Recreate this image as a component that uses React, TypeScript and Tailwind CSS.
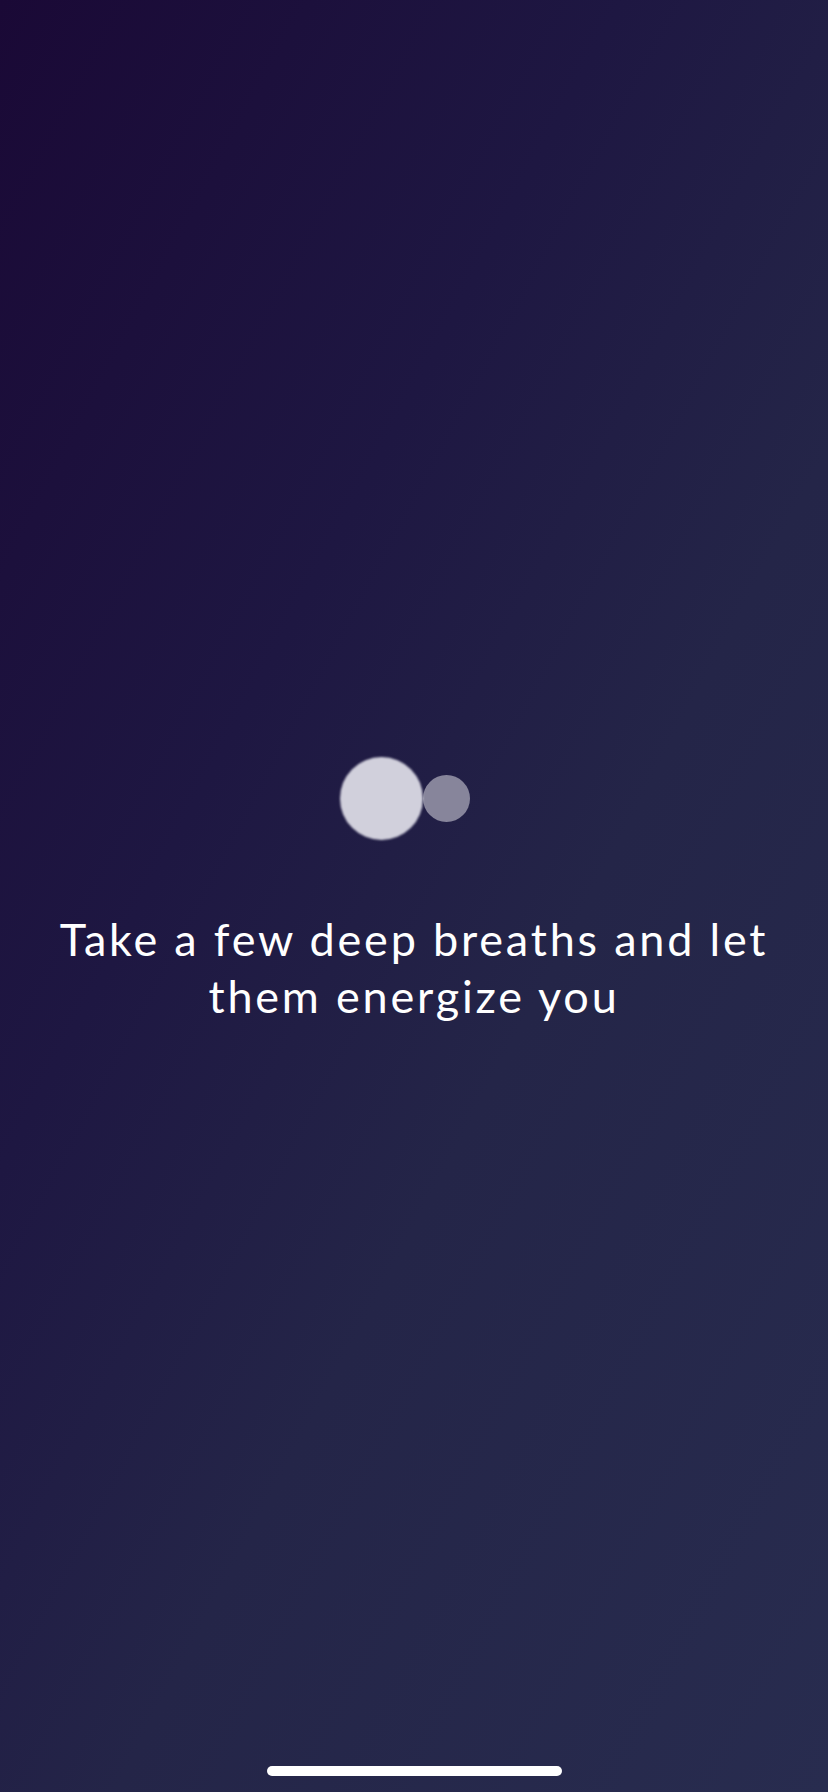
export default function App() {
  return (
    <div className="relative flex h-[1792px] w-[828px] flex-col items-center overflow-hidden bg-[linear-gradient(118deg,#1a0936_0%,#1e1742_35%,#242548_60%,#282c4f_100%)] font-['Lato',sans-serif] text-white">
      {/* breathing dots */}
      <div className="mt-[757px] flex -translate-x-[9px] items-center">
        <div className="z-10 h-[83px] w-[83px] rounded-full bg-[#d1d0dc] blur-[1px]" />
        <div className="h-[47px] w-[47px] rounded-full bg-[#87859b] blur-[0.5px]" />
      </div>

      <p className="mt-[71px] whitespace-nowrap text-center text-[45px] leading-[57px] tracking-[2.8px]">
        Take a few deep breaths and let
        <br />
        them energize you
      </p>

      {/* home indicator */}
      <div className="absolute bottom-[16px] left-[267px] h-[10px] w-[295px] rounded-full bg-white" />
    </div>
  );
}
